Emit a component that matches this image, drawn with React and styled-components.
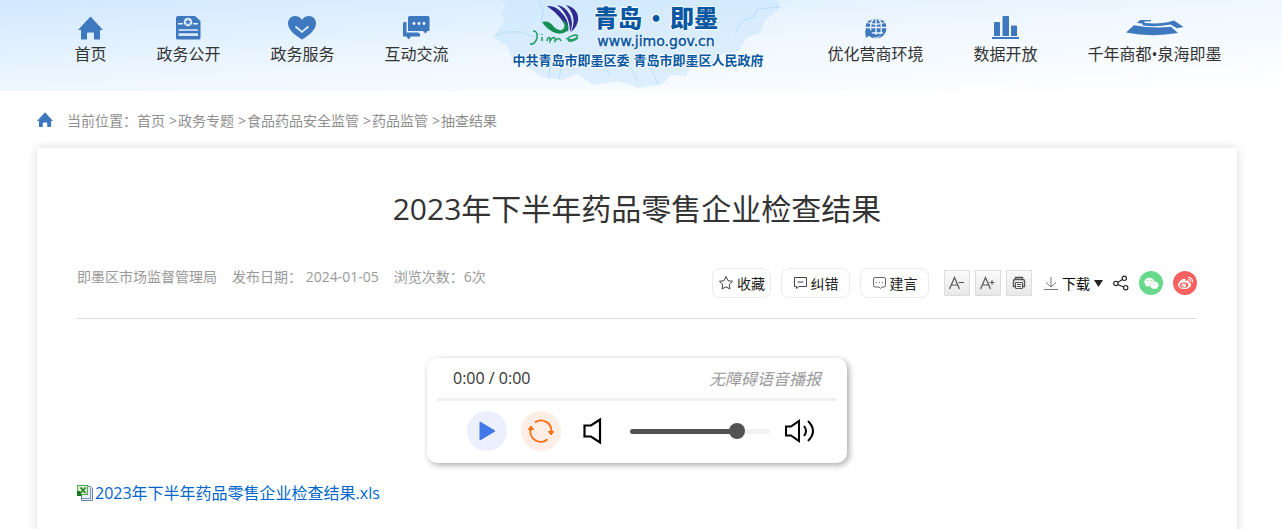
import React, { useState } from "react";
import styled, { createGlobalStyle } from "styled-components";
import { FaWeixin, FaWeibo } from "react-icons/fa";

const GlobalStyle = createGlobalStyle`
  * {
    box-sizing: border-box;
  }
  body {
    margin: 0;
    background: #fff;
    color: #333;
    font-family: "Open Sans", "Noto Sans CJK SC", sans-serif;
    font-size: 16px;
  }
  a {
    color: inherit;
    text-decoration: none;
  }
  button {
    font-family: inherit;
    cursor: pointer;
  }
  svg {
    display: block;
    flex-shrink: 0;
  }
`;

const Header = styled.header`
  display: flex;
  justify-content: center;
  height: 91px;
  padding-left: 14px;
  background: linear-gradient(to bottom right, #d1e8ff, #eff7ff 50%, #fff);
`;
const Nav = styled.nav`
  display: flex;
`;
const NavItem = styled.a`
  display: flex;
  flex-direction: column;
  align-items: center;
  padding: 16px 25px 0;
  line-height: 28px;
  white-space: nowrap;
`;
const NavIcon = styled.span`
  display: flex;
  align-items: center;
  height: 24px;
`;
const Brand = styled.a`
  position: relative;
  width: 329px;
  color: #0757a3;
`;
const MapShape = styled.svg`
  position: absolute;
  top: 0;
  left: 12px;
`;
const BrandInner = styled.div`
  position: relative;
  display: flex;
  flex-direction: column;
  align-items: center;
  text-shadow: 1px 0 1px #fff, -1px 0 1px #fff, 0 1px 1px #fff, 0 -1px 1px #fff;
`;
const BrandTop = styled.div`
  display: flex;
  gap: 14px;
  height: 49px;
  padding-top: 3px;
  margin-right: 28px;
`;
const BrandWords = styled.div`
  display: flex;
  flex-direction: column;
  align-items: center;
`;
const BrandName = styled.strong`
  display: flex;
  gap: 2px;
  font-family: "Noto Sans CJK SC", sans-serif;
  font-size: 24px;
  font-weight: 900;
  line-height: 28px;
`;
const BrandUrl = styled.span`
  font-family: "DejaVu Sans", sans-serif;
  font-size: 14px;
  line-height: 20px;
  -webkit-text-stroke: 0.5px #0757a3;
`;
const BrandOrgs = styled.div`
  display: flex;
  gap: 4px;
  font-size: 13px;
  font-weight: 700;
  line-height: 22px;
  white-space: nowrap;
`;

const Page = styled.main`
  max-width: 1282px;
  margin: 0 auto;
  padding: 0 45px 0 37px;
`;
const Breadcrumb = styled.nav`
  display: flex;
  align-items: center;
  gap: 14px;
  height: 57px;
  color: #8f8f8f;
  font-size: 14px;
`;
const Separator = styled.span`
  margin: 0 1px 0 4px;
`;
const Card = styled.article`
  padding: 40px;
  min-height: 400px;
  background: #fff;
  box-shadow: 0 0 10px rgba(0, 0, 0, 0.15);
`;
const Title = styled.h1`
  margin: 0;
  color: #333;
  font-size: 30px;
  font-weight: 400;
  line-height: 42px;
  text-align: center;
`;
const InfoBar = styled.div`
  display: flex;
  justify-content: space-between;
  height: 89px;
  padding-top: 38px;
  border-bottom: 1px solid #dcdcdc;
`;
const Meta = styled.div`
  display: flex;
  gap: 15px;
  color: #999;
  font-size: 14px;
  line-height: 18px;
`;
const Tools = styled.div`
  display: flex;
  align-items: center;
  height: 30px;
`;
const PillButton = styled.button`
  display: flex;
  align-items: center;
  justify-content: center;
  gap: 3px;
  width: ${(props) => (props.$compact ? 59 : 69)}px;
  height: 30px;
  margin-right: 10px;
  padding: 0;
  border: 1px solid #ebebeb;
  border-radius: 8px;
  background: #fff;
  color: #222;
  font-size: 14px;
`;
const SquareTools = styled.div`
  display: flex;
  gap: 5px;
  margin: 0 12px 0 5px;
`;
const SquareButton = styled.button`
  display: flex;
  align-items: center;
  justify-content: center;
  width: 26px;
  height: 26px;
  padding: 0;
  border: 1px solid #ddd;
  background: linear-gradient(#fafafa, #e8e8e8);
`;
const DownloadButton = styled.button`
  display: flex;
  align-items: center;
  gap: 4px;
  margin-right: 10px;
  padding: 0;
  border: 0;
  background: none;
  color: #000;
  font-size: 14px;
`;
const ShareLinks = styled.div`
  display: flex;
  align-items: center;
  gap: 10px;
`;
const ShareCircle = styled.a`
  display: flex;
  align-items: center;
  justify-content: center;
  width: 24px;
  height: 24px;
  border-radius: 50%;
  background: ${(props) => props.$color};
  color: #fff;
`;

const Player = styled.section`
  width: 420px;
  height: 105px;
  margin: 39px auto 0;
  padding: 0 10px;
  border-radius: 10px;
  background: #fff;
  box-shadow: 2px 2px 6px rgba(0, 0, 0, 0.35);
`;
const PlayerHead = styled.div`
  display: flex;
  align-items: center;
  justify-content: space-between;
  height: 40px;
  padding: 0 16px;
`;
const PlayerLabel = styled.em`
  color: #999;
`;
const Progress = styled.div`
  height: 3px;
  border-radius: 2px;
  background: #efefef;
`;
const Controls = styled.div`
  display: flex;
  align-items: center;
  height: 60px;
  padding: 0 22px 0 30px;
`;
const RoundButton = styled.button`
  display: flex;
  align-items: center;
  justify-content: center;
  width: 40px;
  height: 40px;
  margin-right: 14px;
  padding: 0;
  border: 0;
  border-radius: 50%;
  background: ${(props) => props.$bg};
`;
const IconButton = styled.button`
  display: flex;
  padding: 0;
  border: 0;
  background: none;
`;
const Volume = styled.input`
  flex: 1;
  min-width: 0;
  height: 16px;
  margin: 0 15px 0 22px;
  background: none;
  appearance: none;

  &::-webkit-slider-runnable-track {
    height: 5px;
    border-radius: 3px;
    background: linear-gradient(90deg, #525252 78%, #f1f1f1 78%);
  }
  &::-webkit-slider-thumb {
    width: 16px;
    height: 16px;
    margin-top: -6px;
    border-radius: 50%;
    background: #525252;
    appearance: none;
  }
`;
const Attachment = styled.a`
  display: inline-flex;
  align-items: center;
  gap: 1px;
  margin-top: 18px;
  color: #0066cc;
  line-height: 24px;
`;

const blue = "#3e78bf";

const HomeIcon = ({ size = 25 }) => (
  <svg width={size} height={size} viewBox="0 0 25 24" fill={blue}>
    <path d="M12.5 0 25 13.5H22V23H16V17Q16 16 15 16H10Q9 16 9 17V23H3V13.5H0Z" />
  </svg>
);
const DocIcon = () => (
  <svg width="25" height="24" viewBox="0 0 25 24">
    <path d="M2 0H19L24.5 5V22Q24.5 23.5 23 23.5H1.5Q0 23.5 0 22V2Q0 0 2 0Z" fill={blue} />
    <circle cx="12" cy="6" r="4.3" fill="#e2f0fe" />
    <path d="M12 2.7 12.9 5H15.2L13.4 6.5 14 8.9 12 7.5 10 8.9 10.6 6.5 8.8 5H11.1Z" fill={blue} />
    <path d="M2 7.7H7M17 7.7H22M2.5 14H22" stroke="#e2f0fe" strokeWidth="1.6" />
    <path d="M2.5 18.6H22" stroke="#e2f0fe" strokeWidth="2.6" />
  </svg>
);
const HeartIcon = () => (
  <svg width="28" height="24" viewBox="0 0 28 24">
    <path d="M14 23.5C10 21 0 15 0 7.5 0 3 3.2 0 7 0 10 0 12.5 1.5 14 4 15.5 1.5 18 0 21 0 24.8 0 28 3 28 7.5 28 15 18 21 14 23.5Z" fill={blue} />
    <path d="M7.5 10.5 14 16 20.5 10.5" fill="none" stroke="#e2f0fe" strokeWidth="1.7" />
  </svg>
);
const ChatIcon = () => (
  <svg width="27" height="24" viewBox="0 0 27 24" fill={blue}>
    <path d="M6.5 0H25Q26.5 0 26.5 1.5V15H24.5L22.5 17.5 20 15H5V1.5Q5 0 6.5 0Z" />
    <path d="M1.5 6H3.5V16.5H15L17 18V20.5H8L5.5 23.5 3.5 20.5H0V7.5Q0 6 1.5 6Z" />
    <g fill="#fff">
      <circle cx="11" cy="7.5" r="1.4" />
      <circle cx="16" cy="7.5" r="1.4" />
      <circle cx="21" cy="7.5" r="1.4" />
    </g>
  </svg>
);
const GlobeIcon = () => (
  <svg width="22" height="22" viewBox="0 0 22 22" fill="none">
    <circle cx="11" cy="11" r="10.5" fill={blue} />
    <g stroke="#f0f7fe" strokeWidth="1.3">
      <path d="M0 10.5H22M2.5 5.5Q11 9 19.5 5.5M4 16H18M11 0V18" />
      <ellipse cx="11" cy="11" rx="5.5" ry="10" />
      <path d="M4.5 3.5 8 1M14 1 17.5 3.5" />
    </g>
    <path d="M0 13.5 8.5 13.5 6.5 16Q11 19.5 17 16.5 12 23 4 18.8L1 21Z" fill={blue} />
  </svg>
);
const BarsIcon = () => (
  <svg width="27" height="24" viewBox="0 0 27 24" fill={blue}>
    <path d="M3 6H7Q8 6 8 7V20H2V7Q2 6 3 6ZM11.5 0H16Q17 0 17 1V20H10.5V1Q10.5 0 11.5 0ZM20 9.5H24Q25 9.5 25 10.5V20H19V10.5Q19 9.5 20 9.5ZM0 21H27V23H0Z" />
  </svg>
);
const CityIcon = () => (
  <svg width="58" height="16" viewBox="0 0 58 16" fill={blue}>
    <path d="M0 12.5 8 5.2Q27 9 45 6.8L52 13Q26 17.5 0 12.5Z" />
    <path d="M14 0H25V1.3L18 1.5 19 3Q36 4.5 48 .5L57.5 7 51 8.2 44.5 4.5Q30 7.5 17 5.5L16 3.5 11 3Z" />
  </svg>
);

const LogoMark = () => (
  <svg width="50" height="44" viewBox="0 0 50 44" fill="none">
    <path d="M17 3Q25 2 31 9 40 18 38 29 33 14 17 3ZM27 2Q35 3 40 12 44 21 40 29 40 12 27 2ZM36 2Q44 4 47 10 51 20 41 29 48 14 36 2Z" fill="#302a91" />
    <path d="M12 19Q19 17 24 24 28 28 32 27 37 24 32 16 41 22 37 28 31 33 23 29 17 26 12 19Z" fill="#138f52" />
    <path d="M3 28Q8 28 7 35 5 42 0 41M12 34V38M12 31V32M17 38Q18 33 20 35V38Q23 33 25 35V38Q29 33 31 38M36 35Q40 38 45 36 50 32 45 32 36 34 39 38 43 39 48 35" stroke="#1d9c5b" strokeWidth="1.5" />
  </svg>
);

const StarIcon = () => (
  <svg width="16" height="16" viewBox="0 0 16 16" fill="none" stroke="#444">
    <path d="M8 1.5 10 5.7 14.5 6.3 11.2 9.5 12 14 8 11.8 4 14 4.8 9.5 1.5 6.3 6 5.7Z" strokeLinejoin="round" />
  </svg>
);
const ErrorIcon = () => (
  <svg width="15" height="14" viewBox="0 0 15 14" fill="none" stroke="#444">
    <path d="M1.5 1.5H13.5V10.5H6L3.5 12.5V10.5H1.5ZM4.5 6H10.5" />
  </svg>
);
const SuggestIcon = () => (
  <svg width="15" height="14" viewBox="0 0 15 14" fill="none" stroke="#666">
    <path d="M3 1.5H12Q13.5 1.5 13.5 3V9.5Q13.5 11 12 11H10L8.5 12.5 7 11H3Q1.5 11 1.5 9.5V3Q1.5 1.5 3 1.5Z" />
    <path d="M4 6.5H5M7 6.5H8M10 6.5H11" />
  </svg>
);
const FontSizeIcon = ({ plus }) => (
  <svg width="18" height="14" viewBox="0 0 18 14" fill="none" stroke="#555">
    <path d="M1.5 13 6.5 1.5 11.5 13M3.3 9H9.7" strokeWidth="1.2" />
    <path d={plus ? "M10.5 6.5H15.5M13 4V9" : "M10.5 6.5H16"} />
  </svg>
);
const PrintIcon = () => (
  <svg width="14" height="14" viewBox="0 0 14 14" fill="none" stroke="#555">
    <path d="M3.5 3.5V1.5H10.5V3.5M3 10.5H1.5V5Q1.5 3.5 3 3.5H11Q12.5 3.5 12.5 5V10.5H11" strokeWidth="1.4" />
    <path d="M3.5 6.5H10.5V12.5H3.5ZM5 8.5H9M5 10.5H9" />
  </svg>
);
const DownloadIcon = () => (
  <svg width="14" height="16" viewBox="0 0 14 16" fill="none" stroke="#777">
    <path d="M7 2V12M2 7.5 7 12 12 7.5M0 14.5H14" />
  </svg>
);
const ShareIcon = () => (
  <svg width="16" height="16" viewBox="0 0 17 16" fill="none" stroke="#222" strokeWidth="1.2">
    <circle cx="3" cy="8.5" r="2.3" />
    <circle cx="12" cy="3" r="2.3" />
    <circle cx="13.5" cy="13" r="2.3" />
    <path d="M5 7.5 10 4.3M5 9.5 11.3 12.2" />
  </svg>
);
const LoopIcon = () => (
  <svg width="26" height="24" viewBox="0 0 26 24" fill="none" stroke="#ff6d13" strokeWidth="1.9">
    <path d="M7 3.5A10.3 10.3 0 0 1 23.3 13M19.5 20.2A10.3 10.3 0 0 1 2.7 10" />
    <path d="M20.3 12.5H25.7L23 16ZM.3 10.5H5.7L3 7Z" fill="#ff6d13" strokeWidth="1" />
  </svg>
);
const XlsIcon = () => (
  <svg width="17" height="16" viewBox="0 0 17 16">
    <path d="M4.5 1.5H13.5L15.5 3.5V15.5H4.5Z" fill="#e9effa" stroke="#6680a8" />
    <path d="M13.5 3V13.5H5" fill="none" stroke="#7b95be" />
    <rect x=".5" y=".5" width="10" height="9" fill="#dceccf" stroke="#55a94f" />
    <path d="M0 6H3L5 11H0Z" fill="#197527" />
    <path d="M3.5 2.5 8.5 8M8.5 2.5 3.5 8" stroke="#26862c" strokeWidth="1.8" />
  </svg>
);

const leftNav = [
  { label: "首页", Icon: HomeIcon },
  { label: "政务公开", Icon: DocIcon },
  { label: "政务服务", Icon: HeartIcon },
  { label: "互动交流", Icon: ChatIcon },
];
const rightNav = [
  { label: "优化营商环境", Icon: GlobeIcon },
  { label: "数据开放", Icon: BarsIcon },
  { label: "千年商都•泉海即墨", Icon: CityIcon },
];
const crumbs = ["首页", "政务专题", "食品药品安全监管", "药品监管", "抽查结果"];

const NavGroup = ({ items }) => (
  <Nav>
    {items.map(({ label, Icon }) => (
      <NavItem key={label} href="#">
        <NavIcon><Icon /></NavIcon>
        {label}
      </NavItem>
    ))}
  </Nav>
);

export default function App() {
  const [volume, setVolume] = useState(80);

  return (
    <>
      <GlobalStyle />
      <Header>
        <NavGroup items={leftNav} />
        <Brand href="#">
          <MapShape width="300" height="91" viewBox="0 0 300 91" fill="none">
            <path d="M15 0 20 6 14 14 20 20 13 28 8 38 22 47 26 60 43 68 56 77 76 80 91 74 107 85 132 81 153 88 177 84 184 75 199 76 208 65 224 66 236 54 253 51 260 38 274 33 278 21 294 8 291 0Z" fill="#c5e3fd" fillOpacity=".5" />
            <path d="M7 36 20 32H36L47 37 55 33M53 0 58 12 55 20 61 30M62 54 65 63 62 79M76 64 73 79M112 61 125 75M127 54 145 68 152 82M160 57 166 71 173 86M249 33 256 21 268 17 271 9 295 7" stroke="#acd7fb" strokeOpacity=".7" />
          </MapShape>
          <BrandInner>
            <BrandTop>
              <LogoMark />
              <BrandWords>
                <BrandName>
                  <span>青岛</span>
                  <span>·</span>
                  <span>即墨</span>
                </BrandName>
                <BrandUrl>www.jimo.gov.cn</BrandUrl>
              </BrandWords>
            </BrandTop>
            <BrandOrgs>
              <span>中共青岛市即墨区委</span>
              <span>青岛市即墨区人民政府</span>
            </BrandOrgs>
          </BrandInner>
        </Brand>
        <NavGroup items={rightNav} />
      </Header>

      <Page>
        <Breadcrumb>
          <HomeIcon size={16} />
          <div>
            当前位置：
            {crumbs.map((name, i) => (
              <React.Fragment key={name}>
                {i > 0 && <Separator>&gt;</Separator>}
                <a href="#">{name}</a>
              </React.Fragment>
            ))}
          </div>
        </Breadcrumb>

        <Card>
          <Title>2023年下半年药品零售企业检查结果</Title>
          <InfoBar>
            <Meta>
              <span>即墨区市场监督管理局</span>
              <span>发布日期： 2024-01-05</span>
              <span>浏览次数：6次</span>
            </Meta>
            <Tools>
              <PillButton $compact><StarIcon />收藏</PillButton>
              <PillButton><ErrorIcon />纠错</PillButton>
              <PillButton><SuggestIcon />建言</PillButton>
              <SquareTools>
                <SquareButton aria-label="缩小字号"><FontSizeIcon /></SquareButton>
                <SquareButton aria-label="放大字号"><FontSizeIcon plus /></SquareButton>
                <SquareButton aria-label="打印"><PrintIcon /></SquareButton>
              </SquareTools>
              <DownloadButton>
                <DownloadIcon />
                下载
                <svg width="9" height="7" viewBox="0 0 9 7"><path d="M0 0H9L4.5 7Z" fill="#222" /></svg>
              </DownloadButton>
              <ShareLinks>
                <IconButton aria-label="分享"><ShareIcon /></IconButton>
                <ShareCircle href="#" aria-label="微信" $color="#68d98b"><FaWeixin size={15} /></ShareCircle>
                <ShareCircle href="#" aria-label="微博" $color="#f76260"><FaWeibo size={15} /></ShareCircle>
              </ShareLinks>
            </Tools>
          </InfoBar>

          <Player>
            <PlayerHead>
              <span>0:00 / 0:00</span>
              <PlayerLabel>无障碍语音播报</PlayerLabel>
            </PlayerHead>
            <Progress />
            <Controls>
              <RoundButton aria-label="播放" $bg="#ecf0fe">
                <svg width="18" height="20" viewBox="0 0 18 20"><path d="M2 1 17 10 2 19Z" fill="#4179ec" stroke="#4179ec" strokeLinejoin="round" /></svg>
              </RoundButton>
              <RoundButton aria-label="重播" $bg="#ffeee5"><LoopIcon /></RoundButton>
              <IconButton aria-label="静音">
                <svg width="33" height="28" viewBox="0 0 33 28" fill="none" stroke="#000" strokeWidth="2.2"><path d="M9.5 8.5H16L25 2.5V25.5L16 19.5H9.5Z" /></svg>
              </IconButton>
              <Volume
                type="range"
                aria-label="音量"
                min="0"
                max="100"
                value={volume}
                onChange={(e) => setVolume(e.target.value)}
              />
              <IconButton aria-label="最大音量">
                <svg width="30" height="26" viewBox="0 0 30 26" fill="none" stroke="#000" strokeWidth="2"><path d="M1 8.5H6L14 3V23L6 17.5H1ZM19 8Q23 13 19 18M23 3Q33 13 23 23" /></svg>
              </IconButton>
            </Controls>
          </Player>

          <Attachment href="#">
            <XlsIcon />
            2023年下半年药品零售企业检查结果.xls
          </Attachment>
        </Card>
      </Page>
    </>
  );
}
